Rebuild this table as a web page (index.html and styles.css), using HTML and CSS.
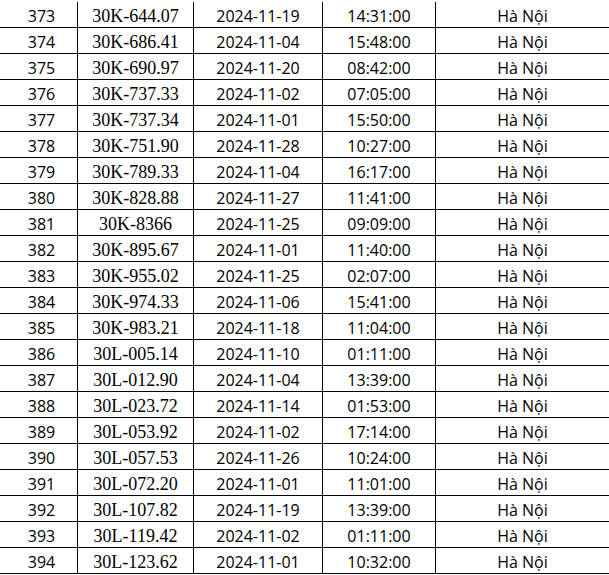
FILE: index.html
```html
<!DOCTYPE html>
<html lang="vi">
<head>
<meta charset="utf-8">
<title>Danh sách</title>
<link rel="stylesheet" href="styles.css">
</head>
<body>
<table class="list">
<colgroup><col class="c-no"><col class="c-plate"><col class="c-date"><col class="c-time"><col class="c-place"></colgroup>
<tbody>
<tr><td class="no">373</td><td class="plate">30K-644.07</td><td>2024-11-19</td><td>14:31:00</td><td>Hà Nội</td></tr>
<tr><td class="no">374</td><td class="plate">30K-686.41</td><td>2024-11-04</td><td>15:48:00</td><td>Hà Nội</td></tr>
<tr><td class="no">375</td><td class="plate">30K-690.97</td><td>2024-11-20</td><td>08:42:00</td><td>Hà Nội</td></tr>
<tr><td class="no">376</td><td class="plate">30K-737.33</td><td>2024-11-02</td><td>07:05:00</td><td>Hà Nội</td></tr>
<tr><td class="no">377</td><td class="plate">30K-737.34</td><td>2024-11-01</td><td>15:50:00</td><td>Hà Nội</td></tr>
<tr><td class="no">378</td><td class="plate">30K-751.90</td><td>2024-11-28</td><td>10:27:00</td><td>Hà Nội</td></tr>
<tr><td class="no">379</td><td class="plate">30K-789.33</td><td>2024-11-04</td><td>16:17:00</td><td>Hà Nội</td></tr>
<tr><td class="no">380</td><td class="plate">30K-828.88</td><td>2024-11-27</td><td>11:41:00</td><td>Hà Nội</td></tr>
<tr><td class="no">381</td><td class="plate">30K-8366</td><td>2024-11-25</td><td>09:09:00</td><td>Hà Nội</td></tr>
<tr><td class="no">382</td><td class="plate">30K-895.67</td><td>2024-11-01</td><td>11:40:00</td><td>Hà Nội</td></tr>
<tr><td class="no">383</td><td class="plate">30K-955.02</td><td>2024-11-25</td><td>02:07:00</td><td>Hà Nội</td></tr>
<tr><td class="no">384</td><td class="plate">30K-974.33</td><td>2024-11-06</td><td>15:41:00</td><td>Hà Nội</td></tr>
<tr><td class="no">385</td><td class="plate">30K-983.21</td><td>2024-11-18</td><td>11:04:00</td><td>Hà Nội</td></tr>
<tr><td class="no">386</td><td class="plate">30L-005.14</td><td>2024-11-10</td><td>01:11:00</td><td>Hà Nội</td></tr>
<tr><td class="no">387</td><td class="plate">30L-012.90</td><td>2024-11-04</td><td>13:39:00</td><td>Hà Nội</td></tr>
<tr><td class="no">388</td><td class="plate">30L-023.72</td><td>2024-11-14</td><td>01:53:00</td><td>Hà Nội</td></tr>
<tr><td class="no">389</td><td class="plate">30L-053.92</td><td>2024-11-02</td><td>17:14:00</td><td>Hà Nội</td></tr>
<tr><td class="no">390</td><td class="plate">30L-057.53</td><td>2024-11-26</td><td>10:24:00</td><td>Hà Nội</td></tr>
<tr><td class="no">391</td><td class="plate">30L-072.20</td><td>2024-11-01</td><td>11:01:00</td><td>Hà Nội</td></tr>
<tr><td class="no">392</td><td class="plate">30L-107.82</td><td>2024-11-19</td><td>13:39:00</td><td>Hà Nội</td></tr>
<tr><td class="no">393</td><td class="plate">30L-119.42</td><td>2024-11-02</td><td>01:11:00</td><td>Hà Nội</td></tr>
<tr><td class="no">394</td><td class="plate">30L-123.62</td><td>2024-11-01</td><td>10:32:00</td><td>Hà Nội</td></tr>
</tbody>
</table>
</body>
</html>
```
FILE: styles.css
```css
html, body {
  margin: 0;
  padding: 0;
  background: #ffffff;
}
body {
  overflow: hidden;
}
.list {
  border-collapse: collapse;
  table-layout: fixed;
  width: 610px;
  margin: 2px 0 0 -1px;
  font-family: "Open Sans", "Liberation Sans", sans-serif;
  font-size: 16px;
  color: #000;
}
.c-no { width: 78px; }
.c-plate { width: 116px; }
.c-date { width: 129px; }
.c-time { width: 113px; }
.c-place { width: 174px; }
.list td {
  border: 1px solid #000;
  height: 23px;
  padding: 2px 0 0 0;
  text-align: center;
  vertical-align: middle;
  line-height: 20px;
  white-space: nowrap;
}
.list tr:first-child td {
  border-top-style: hidden;
}
.list td.no {
  padding-left: 6px;
}
.list td.plate {
  font-family: "Liberation Serif", "Times New Roman", serif;
  font-size: 18px;
}
```
